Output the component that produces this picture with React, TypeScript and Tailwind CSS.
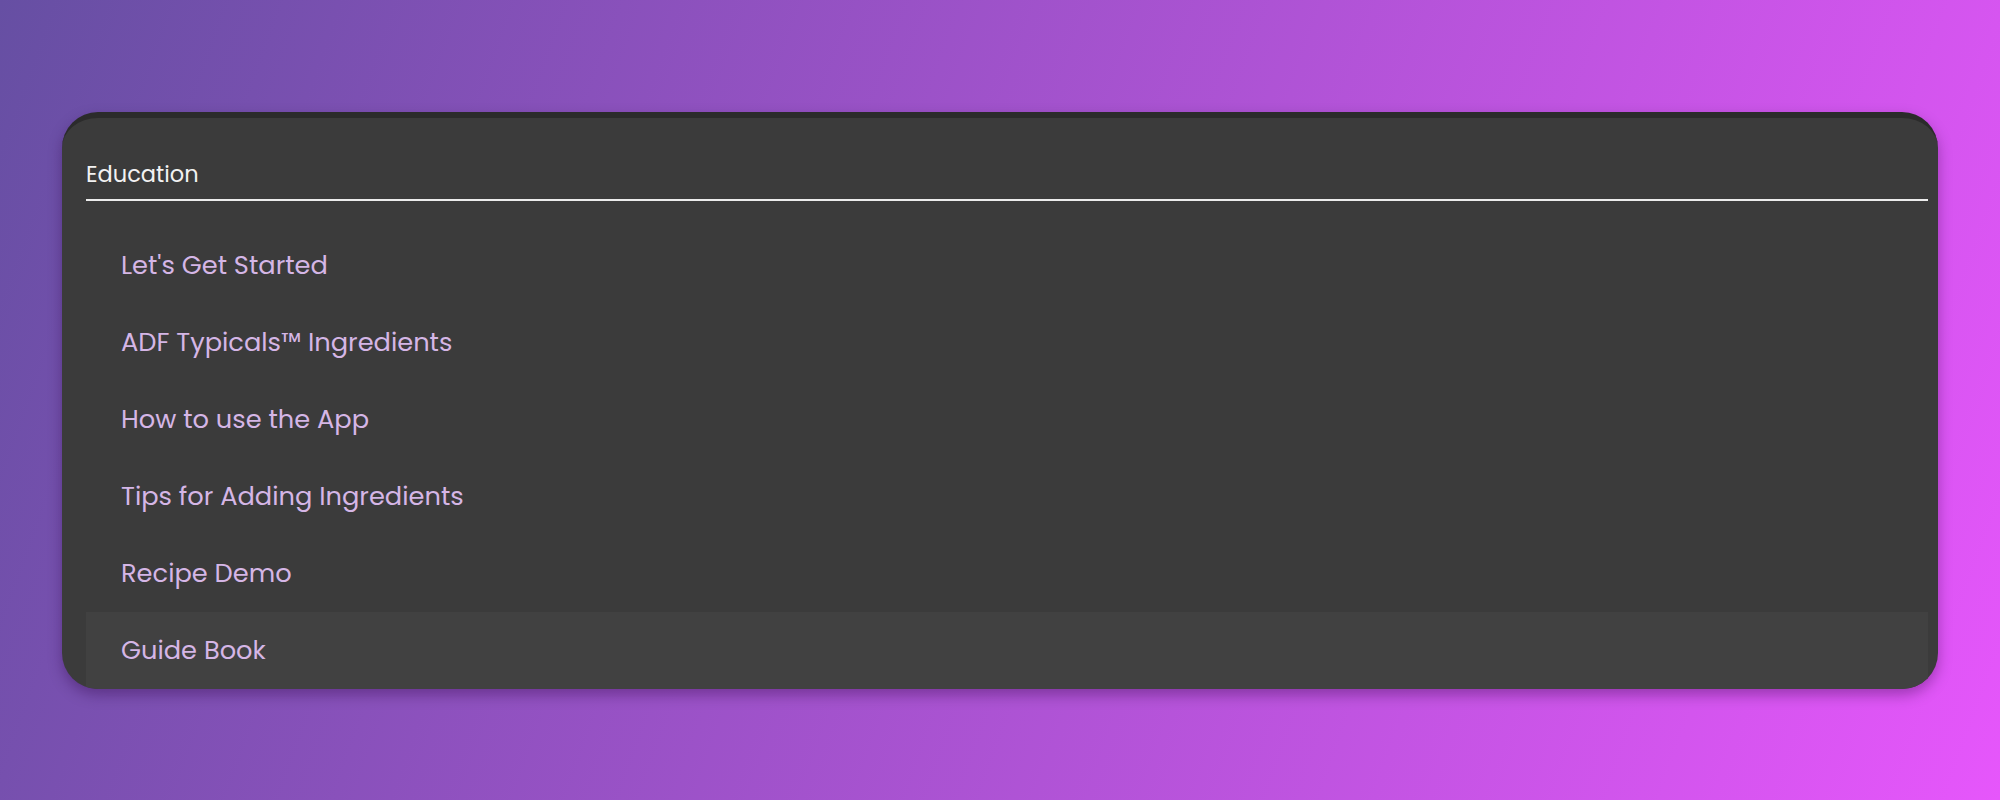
const educationItems = [
  "Let's Get Started",
  'ADF Typicals™ Ingredients',
  'How to use the App',
  'Tips for Adding Ingredients',
  'Recipe Demo',
  'Guide Book',
]

export default function App() {
  const active = 'Guide Book'

  return (
    <div className="min-h-screen w-full bg-[linear-gradient(110deg,#664fa3,#e656fb)] px-[62px] pt-[112px] font-['Poppins','Open_Sans',sans-serif]">
      {/* Card */}
      <div className="overflow-hidden rounded-[36px] border-t-[6px] border-[#2b2b2b] bg-[#3b3b3b] pl-[24px] pr-[10px] shadow-[0_6px_14px_rgba(40,0,60,0.35)]">
        <div className="border-b-2 border-[#ececec] pt-[41px] pb-[10px]">
          <h2 className="text-[22.5px] leading-[30px] text-[#f2f2f2]">Education</h2>
        </div>

        <ul className="pt-[26px]">
          {educationItems.map((item) => (
            <li
              key={item}
              className={
                'flex h-[77px] items-center pl-[35px] text-[25.7px] text-[#d5b6e6] ' +
                (item === active ? 'bg-[#414141]' : '')
              }
            >
              {item}
            </li>
          ))}
        </ul>
      </div>
    </div>
  )
}
